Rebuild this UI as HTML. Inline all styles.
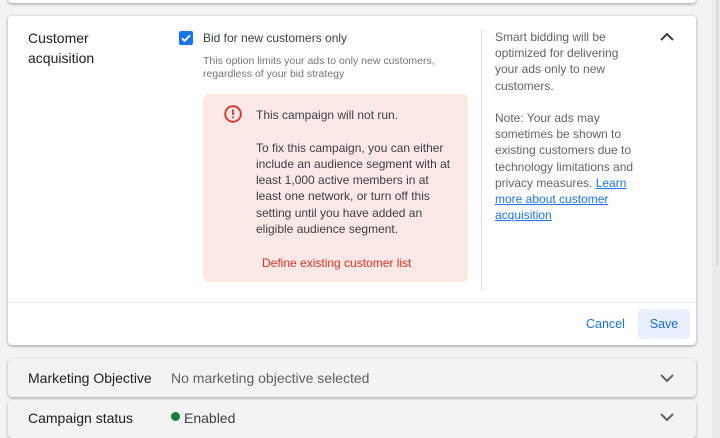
<!DOCTYPE html>
<html><head><style>
body{margin:0;width:720px;height:438px;background:#f1f3f4;font-family:"Liberation Sans",sans-serif;position:relative;overflow:hidden;color:#3c4043}
.abs{position:absolute}
.card{background:#fff;border-radius:4px;box-shadow:0 1px 2px rgba(60,64,67,.3),0 1px 3px 1px rgba(60,64,67,.15)}
.row{background:#f1f3f4;border-radius:4px;box-shadow:0 1px 2px rgba(60,64,67,.3),0 1px 3px rgba(60,64,67,.15)}
</style></head><body>
<div class="abs card" style="left:8px;top:-10px;width:688px;height:13px"></div>
<div class="abs" style="left:712px;top:0;width:8px;height:438px;background:#e8eaed"></div>
<div class="abs" style="left:716px;top:0;width:3px;height:265px;background:#dadce0"></div>
<div class="abs card" style="left:8px;top:16px;width:688px;height:329px">
 <div class="abs" style="left:20px;top:12px;font-size:14px;line-height:20px;color:#202124">Customer<br>acquisition</div>
 <div class="abs" style="left:171px;top:15px;width:14px;height:14px;background:#1a73e8;border-radius:2px">
  <svg width="14" height="14" viewBox="0 0 14 14"><path d="M3 7.2l2.6 2.6L11 4.4" fill="none" stroke="#fff" stroke-width="1.8"/></svg></div>
 <div class="abs" style="left:195px;top:15px;font-size:12px;color:#3c4043">Bid for new customers only</div>
 <div class="abs" style="left:195px;top:39px;font-size:10.5px;line-height:13px;color:#70757a">This option limits your ads to only new customers,<br>regardless of your bid strategy</div>
 <div class="abs" style="left:195px;top:78px;width:265px;height:188px;background:#fce8e6;border-radius:6px">
  <svg class="abs" style="left:20px;top:10px" width="20" height="20" viewBox="0 0 20 20"><circle cx="10" cy="10" r="7.8" fill="none" stroke="#d93025" stroke-width="1.8"/><rect x="9.1" y="5.5" width="1.8" height="5.5" fill="#d93025"/><rect x="9.1" y="12.4" width="1.8" height="1.8" fill="#d93025"/></svg>
  <div class="abs" style="left:53px;top:13px;font-size:12px;line-height:16.3px;color:#3c4043;width:195px">This campaign will not run.<br><br>To fix this campaign, you can either include an audience segment with at least 1,000 active members in at least one network, or turn off this setting until you have added an eligible audience segment.</div>
  <div class="abs" style="left:59px;top:162px;font-size:12px;color:#d93025">Define existing customer list</div>
 </div>
 <div class="abs" style="left:473px;top:14px;width:1px;height:260px;background:#dadce0"></div>
 <div class="abs" style="left:487px;top:13px;width:150px;font-size:12px;line-height:16.2px;color:#5f6368">Smart bidding will be optimized for delivering your ads only to new customers.<br><br>Note: Your ads may sometimes be shown to existing customers due to technology limitations and privacy measures. <span style="color:#1a73e8;text-decoration:underline">Learn more about customer acquisition</span></div>
 <svg class="abs" style="left:651px;top:15px" width="16" height="12" viewBox="0 0 16 12"><path d="M2 9l6-6 6 6" fill="none" stroke="#3c4043" stroke-width="2"/></svg>
 <div class="abs" style="left:0;top:286px;width:688px;height:1px;background:#e8eaed"></div>
 <div class="abs" style="left:578px;top:301px;font-size:12.5px;color:#1a73e8">Cancel</div>
 <div class="abs" style="left:630px;top:293px;width:52px;height:30px;background:#e8f0fe;border-radius:4px;font-size:12.5px;color:#1967d2;text-align:center;line-height:30px">Save</div>
</div>
<div class="abs row" style="left:8px;top:359px;width:688px;height:38px">
 <div class="abs" style="left:20px;top:11px;font-size:14px;color:#202124">Marketing Objective</div>
 <div class="abs" style="left:163px;top:11px;font-size:14px;color:#5f6368">No marketing objective selected</div>
 <svg class="abs" style="left:651px;top:13px" width="16" height="12" viewBox="0 0 16 12"><path d="M2 3l6 6 6-6" fill="none" stroke="#5f6368" stroke-width="2"/></svg>
</div>
<div class="abs row" style="left:8px;top:400px;width:688px;height:38px">
 <div class="abs" style="left:20px;top:10px;font-size:14px;color:#202124">Campaign status</div>
 <div class="abs" style="left:163px;top:12px;width:9px;height:9px;border-radius:50%;background:#188038"></div>
 <div class="abs" style="left:176px;top:10px;font-size:14px;color:#3c4043">Enabled</div>
 <svg class="abs" style="left:651px;top:11px" width="16" height="12" viewBox="0 0 16 12"><path d="M2 3l6 6 6-6" fill="none" stroke="#5f6368" stroke-width="2"/></svg>
</div>
</body></html>
